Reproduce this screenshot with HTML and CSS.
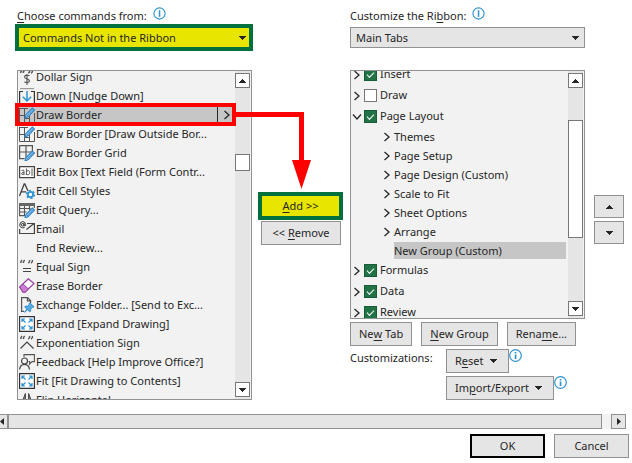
FILE: index.html
```
<!DOCTYPE html>
<html lang="en">
<head>
<meta charset="UTF-8">
<meta name="viewport" content="width=device-width, initial-scale=1.0">
<title>Customize the Ribbon</title>
<link rel="stylesheet" href="styles.css">
</head>
<body>

<!-- shared icons -->
<svg class="sprite" aria-hidden="true">
  <symbol id="down" viewBox="0 0 7 4"><path d="M0 0h7v1H6v1H5v1H4v1H3V3H2V2H1V1H0z"/></symbol>
  <symbol id="up" viewBox="0 0 7 4"><path d="M3 0h1v1h1v1h1v1h1v1H0V3h1V2h1V1h1z"/></symbol>
  <symbol id="chevron" viewBox="0 0 8 10"><path d="M1.5 1L6 5L1.5 9" fill="none" stroke="#262626" stroke-width="1.3"/></symbol>
  <symbol id="info" viewBox="0 0 13 13">
    <circle cx="6.5" cy="6.5" r="5.8" fill="#fff" stroke="#2e93d1" stroke-width="1.2"/>
    <path d="M5.7 3h1.7v1.5H5.7zM5.7 5.5h1.7V10H5.7z" fill="#2e93d1"/>
  </symbol>
  <symbol id="info-thin" viewBox="0 0 13 13">
    <circle cx="6.5" cy="6.5" r="5.6" fill="#fff" stroke="#2e93d1" stroke-width="1.1"/>
    <path d="M5.8 3.2h1.5v6.6H5.8z" fill="#2e93d1"/>
  </symbol>
  <symbol id="quotes" viewBox="0 0 16 16">
    <path d="M3.2 1.2Q1.6 2 1.8 4M5.8 1.2Q4.2 2 4.4 4M10.6 1Q11 3.2 9.2 4.2M13.4 1Q13.8 3.2 12 4.2" fill="none" stroke="#555" stroke-width="1.5"/>
  </symbol>
  <symbol id="pencil" viewBox="0 0 16 16">
    <path d="M6 11L7 7.5L13.3 1L15.5 3L9.3 9.6z" fill="#9fcdf0" stroke="#2d83c8" stroke-width="1.1"/>
    <path d="M8 9L14.4 2.2" stroke="#2d83c8" stroke-width=".8"/>
  </symbol>
  <symbol id="border" viewBox="0 0 16 16">
    <path d="M.5 1v14.500h15V6M.5 1.500H9M.5 8.500H6M5.500 1.500v14M10.500 9v6.500M5.500 11.500h5" fill="none" stroke="#555" stroke-width="1"/>
    <use href="#pencil"/>
  </symbol>
  <symbol id="expand" viewBox="0 0 16 16">
    <path d="M.6.6h14.8v14.8H.6z" fill="#fff" stroke="#333" stroke-width="1.2"/>
    <path d="M6.5 6.5L3 3M9.5 6.5L13 3M6.5 9.5L3 13M9.5 9.5L13 13M3 6V3h3M10 3h3v3M3 10v3h3M10 13h3v-3" fill="none" stroke="#2e93d1" stroke-width="1.2"/>
  </symbol>
</svg>

<div class="columns">
  <section class="commands">
    <div class="caption">
      <label for="source"><u>C</u>hoose commands from:</label>
      <svg class="info"><use href="#info-thin"/></svg>
    </div>
    <div class="picker picker-marked">
      <select id="source"><option>Commands Not in the Ribbon</option></select>
      <svg class="arrow"><use href="#down"/></svg>
    </div>

    <div class="listbox">
      <ul class="items">
        <li><svg class="icon" viewBox="0 0 16 16"><use href="#quotes"/><path d="M10.5 6.5Q5.5 5.5 5.6 8Q5.7 9.4 8 10Q10.6 10.6 10.4 12.3Q9.5 14.3 5.3 13M8 5v11" fill="none" stroke="#555" stroke-width="1.1"/></svg>Dollar Sign</li>
        <li><svg class="icon" viewBox="0 0 16 16"><path d="M1 .6h14" stroke="#999" stroke-width="1.2"/><path d="M4 3.5H.6v12h14.8v-12H12" fill="none" stroke="#333" stroke-width="1.2"/><path d="M8 3v10M3.8 8.8L8 13l4.2-4.2" fill="none" stroke="#2e93d1" stroke-width="1.5"/></svg>Down [Nudge Down]</li>
        <li class="selected"><svg class="icon"><use href="#border"/></svg><span class="name">Draw Border</span><span class="more"><svg><use href="#chevron"/></svg></span></li>
        <li><svg class="icon"><use href="#border"/></svg>Draw Border [Draw Outside Bor...</li>
        <li><svg class="icon" viewBox="0 0 16 16"><path d="M.6.6h12.8v7M7 .6V14M.6 7H12M.6.6v13h5" fill="none" stroke="#555" stroke-width="1.2"/><svg y="5" x="0" width="16" height="16" viewBox="0 0 16 16"><use href="#pencil"/></svg></svg>Draw Border Grid</li>
        <li><svg class="icon" viewBox="0 0 16 16"><path d="M.6 2.6h14.8v11H.6z" fill="#fff" stroke="#444" stroke-width="1.2"/><path d="M2.5 6.5Q5 5.3 5 7.2V11M5 8.5Q2.4 8.3 2.4 9.8Q2.7 11.4 5 10M7.4 4.5V11M7.4 7.4Q10.6 5.2 10.7 8.6Q10.4 11.7 7.4 10.3M13 4.5v7.3" fill="none" stroke="#555"/></svg>Edit Box [Text Field (Form Contr...</li>
        <li><svg class="icon" viewBox="0 0 16 16"><path d="M.5 13L5.2 1h.6L9 8M2.2 8.8h5" fill="none" stroke="#444" stroke-width="1.3"/><circle cx="11.5" cy="11.5" r="2.6" fill="#fff" stroke="#2e93d1" stroke-width="1.8"/><circle cx="11.5" cy="11.5" r="3.9" fill="none" stroke="#2e93d1" stroke-width="1.6" stroke-dasharray="2 2.08"/></svg>Edit Cell Styles</li>
        <li><svg class="icon" viewBox="0 0 16 16"><path d="M.6 1.6h14.8V6M.6 1.6v12h6M5.5 4v9.5M10.5 4v4M.6 6.5h11M.6 10h7" fill="none" stroke="#555" stroke-width="1.1"/><path d="M0 1h16v3H0z" fill="#666"/><svg y="5" x="0" width="16" height="16" viewBox="0 0 16 16"><use href="#pencil"/></svg></svg>Edit Query...</li>
        <li><svg class="icon" viewBox="0 0 16 16"><path d="M8 2.5h7.4v10H.6V8M7.5 8.5l7.5-6" fill="none" stroke="#444" stroke-width="1.2"/><circle cx="3.7" cy="3.8" r="1.3" fill="none" stroke="#333"/><path d="M5 2.4v2.3Q6.6 5.5 6.6 3.3Q6 .6 3.6.6Q.7 1 .7 4.2Q1.2 7.5 5.6 6.6" fill="none" stroke="#333"/></svg>Email</li>
        <li><span class="icon"></span>End Review...</li>
        <li><svg class="icon" viewBox="0 0 16 16"><use href="#quotes"/><path d="M4 9.5h8M4 12.5h8" stroke="#444" stroke-width="1.1"/></svg>Equal Sign</li>
        <li><svg class="icon" viewBox="0 0 16 16"><path d="M.8 9L9.3.8l5.6 4.8L6 14H4z" fill="#fff" stroke="#9b3fa8" stroke-width="1.3"/><path d="M.8 9L4 6l5.5 5L6 14.3H4z" fill="#c77dd0" stroke="#9b3fa8"/></svg>Erase Border</li>
        <li><svg class="icon" viewBox="0 0 16 16"><path d="M5 14.4H2.6V.6h6l3 3V6M8.4.8v3h3" fill="none" stroke="#555" stroke-width="1.2"/><path d="M11 5.8l4 4-1 .6-.7-.1-1.6 1.8v2l-1 .8-5-5 .8-.9 2 .1 1.7-1.6-.1-1z" fill="#54a9e4" stroke="#2583c6" stroke-width=".8"/><path d="M8.3 12.3L5.4 15.3" stroke="#2583c6" stroke-width="1.2"/></svg>Exchange Folder... [Send to Exc...</li>
        <li><svg class="icon"><use href="#expand"/></svg>Expand [Expand Drawing]</li>
        <li><svg class="icon" viewBox="0 0 16 16"><use href="#quotes"/><path d="M1.5 13.5L8 7l6.5 6.5" fill="none" stroke="#444" stroke-width="1.2"/></svg>Exponentiation Sign</li>
        <li><svg class="icon" viewBox="0 0 16 16"><path d="M5 3V.6h10.4v7H13l-2.4 2.6V7.6H9.5" fill="none" stroke="#555" stroke-width="1.1"/><circle cx="5.5" cy="7" r="3" fill="none" stroke="#444" stroke-width="1.2"/><path d="M.6 15.5Q1 10.4 5.5 10.3Q10 10.4 10.5 15.5" fill="none" stroke="#444" stroke-width="1.2"/></svg>Feedback [Help Improve Office?]</li>
        <li><svg class="icon"><use href="#expand"/></svg>Fit [Fit Drawing to Contents]</li>
        <li><svg class="icon" viewBox="0 0 16 16"><path d="M6.4 1.5V15H1.2zM9.6 1.5V15h5.2z" fill="#888" stroke="#444"/></svg>Flip Horizontal</li>
      </ul>
      <div class="scrollbar">
        <button type="button" aria-label="Scroll up"><svg class="arrow"><use href="#up"/></svg></button>
        <div class="track track-commands"><div class="thumb"></div></div>
        <button type="button" aria-label="Scroll down"><svg class="arrow"><use href="#down"/></svg></button>
      </div>
    </div>

    <div class="callout"></div>
    <svg class="callout-arrow" viewBox="0 0 76 80"><path d="M0 2h68v48h7L65.500 79L56 50h7V7H0z" fill="#f00"/></svg>
  </section>

  <div class="transfer">
    <button type="button" class="add"><u>A</u>dd &gt;&gt;</button>
    <button type="button">&lt;&lt; <u>R</u>emove</button>
  </div>

  <section class="ribbon">
    <div class="caption">
      <label for="target">Customize the Ri<u>b</u>bon:</label>
      <svg class="info"><use href="#info-thin"/></svg>
    </div>
    <div class="picker">
      <select id="target"><option>Main Tabs</option></select>
      <svg class="arrow"><use href="#down"/></svg>
    </div>

    <div class="listbox">
      <ul class="tree">
        <li class="tab"><svg class="twist"><use href="#chevron"/></svg><input type="checkbox" id="t1" checked><label for="t1">Insert</label></li>
        <li class="tab"><svg class="twist"><use href="#chevron"/></svg><input type="checkbox" id="t2"><label for="t2">Draw</label></li>
        <li class="tab"><svg class="twist open"><use href="#chevron"/></svg><input type="checkbox" id="t3" checked><label for="t3">Page Layout</label></li>
        <li class="group"><svg class="twist"><use href="#chevron"/></svg><span>Themes</span></li>
        <li class="group"><svg class="twist"><use href="#chevron"/></svg><span>Page Setup</span></li>
        <li class="group"><svg class="twist"><use href="#chevron"/></svg><span>Page Design (Custom)</span></li>
        <li class="group"><svg class="twist"><use href="#chevron"/></svg><span>Scale to Fit</span></li>
        <li class="group"><svg class="twist"><use href="#chevron"/></svg><span>Sheet Options</span></li>
        <li class="group"><svg class="twist"><use href="#chevron"/></svg><span>Arrange</span></li>
        <li class="group"><span class="twist"></span><span class="current">New Group (Custom)</span></li>
        <li class="tab"><svg class="twist"><use href="#chevron"/></svg><input type="checkbox" id="t4" checked><label for="t4">Formulas</label></li>
        <li class="tab"><svg class="twist"><use href="#chevron"/></svg><input type="checkbox" id="t5" checked><label for="t5">Data</label></li>
        <li class="tab"><svg class="twist"><use href="#chevron"/></svg><input type="checkbox" id="t6" checked><label for="t6">Review</label></li>
      </ul>
      <div class="scrollbar">
        <button type="button" aria-label="Scroll up"><svg class="arrow"><use href="#up"/></svg></button>
        <div class="track track-tabs"><div class="thumb"></div></div>
        <button type="button" aria-label="Scroll down"><svg class="arrow"><use href="#down"/></svg></button>
      </div>
    </div>

    <div class="tab-actions">
      <button type="button">Ne<u>w</u> Tab</button>
      <button type="button"><u>N</u>ew Group</button>
      <button type="button">Rena<u>m</u>e...</button>
    </div>
    <div class="customizations">
      <span class="title">Customizations:</span>
      <div class="menus">
        <div class="menu">
          <button type="button"><span>R<u>e</u>set</span><svg class="arrow"><use href="#down"/></svg></button>
          <svg class="info"><use href="#info"/></svg>
        </div>
        <div class="menu">
          <button type="button"><span>Im<u>p</u>ort/Export</span><svg class="arrow"><use href="#down"/></svg></button>
          <svg class="info"><use href="#info"/></svg>
        </div>
      </div>
    </div>
  </section>

  <div class="movers">
    <button type="button" aria-label="Move up"><svg class="arrow"><use href="#up"/></svg></button>
    <button type="button" aria-label="Move down"><svg class="arrow"><use href="#down"/></svg></button>
  </div>
</div>

<div class="hscroll">
  <button type="button" class="left" aria-label="Scroll left"><svg viewBox="0 0 4 7"><path d="M4 0v7L0 3.500z"/></svg></button>
  <div class="bar"></div>
  <button type="button" class="right" aria-label="Scroll right"><svg viewBox="0 0 4 7"><path d="M0 0v7L4 3.500z"/></svg></button>
</div>

<div class="footer">
  <button type="button" class="ok">OK</button>
  <button type="button">Cancel</button>
</div>

</body>
</html>
```
FILE: styles.css
```
* {
  box-sizing: border-box;
}
body {
  margin: 0;
  padding-top: 7px;
  background-color: #fff;
  color: #262626;
  font-family: "Noto Sans", "Open Sans", sans-serif;
  font-size: 11px;
  line-height: 18px;
  overflow: hidden;
}
ul {
  list-style: none;
  margin: 0;
  padding: 0;
}
svg {
  display: block;
  flex: none;
  fill: #262626;
}
u {
  text-underline-offset: 2px;
}
button, select {
  font: inherit;
  color: inherit;
  white-space: nowrap;
}
button {
  display: flex;
  align-items: center;
  justify-content: center;
  height: 24px;
  padding: 0;
  border: 1px solid #919191;
  background-color: #e5e5e5;
  white-space: pre;
}
.sprite {
  position: absolute;
  width: 0;
  height: 0;
}
.arrow {
  width: 7px;
  height: 4px;
}
.info {
  width: 13px;
  height: 13px;
}
.columns {
  display: grid;
  grid-template-columns: 1fr 80px 1fr 30px;
  gap: 9px;
  height: 393px;
  padding: 0 8px 0 17px;
}
.commands, .ribbon {
  display: flex;
  flex-direction: column;
  min-width: 0;
}
.commands {
  position: relative;
}
.caption {
  display: flex;
  gap: 6px;
  height: 20px;
}
.picker {
  position: relative;
  margin-bottom: 22px;
}
.picker select {
  display: block;
  appearance: none;
  width: 100%;
  height: 21px;
  padding: 0 5px;
  border: 1px solid #919191;
  border-radius: 0;
  background-color: #e5e5e5;
}
.picker .arrow {
  position: absolute;
  top: 9px;
  right: 6px;
}
.picker-marked {
  margin: -3px -1px 19px -2px;
}
.picker-marked select {
  height: 27px;
  padding: 0 4px;
  border: 4px solid #00703c;
  background-color: #e8e600;
}
.picker-marked .arrow {
  top: 12px;
  right: 7px;
}
.listbox {
  display: flex;
  border: 1px solid #919191;
  background-color: #f2f2f2;
  overflow: hidden;
}
.commands .listbox {
  height: 330px;
}
.ribbon .listbox {
  height: 249px;
}
.items, .tree {
  flex: 1;
  min-width: 0;
  white-space: nowrap;
}
.items {
  margin-top: -4px;
}
.items li {
  display: flex;
  align-items: center;
  gap: 1px;
  height: 19px;
  padding-left: 1px;
}
.icon {
  width: 16px;
  height: 16px;
}
.items .selected {
  background-color: #c6c6c6;
}
.name {
  flex: 1;
}
.more {
  display: flex;
  align-items: center;
  justify-content: center;
  width: 18px;
  height: 19px;
  border-left: 1px solid #262626;
}
.more svg {
  width: 8px;
  height: 10px;
}
.scrollbar {
  display: flex;
  flex-direction: column;
  width: 15px;
  margin-right: 1px;
  padding: 2px 0;
  background-color: #e5e5e5;
}
.scrollbar button {
  flex: none;
  width: 15px;
  height: 15px;
  border-color: #777;
  background-color: #fff;
}
.track {
  flex: 1;
}
.thumb {
  border: 1px solid #777;
  background-color: #fff;
}
.track-commands {
  padding-top: 66px;
}
.track-commands .thumb {
  height: 17px;
}
.track-tabs {
  padding-top: 32px;
}
.track-tabs .thumb {
  height: 118px;
}

/* red marker round the chosen command */
.callout {
  position: absolute;
  top: 96px;
  left: -2px;
  right: 16px;
  height: 23px;
  border: 4px solid #f00;
}
.callout-arrow {
  position: absolute;
  top: 103px;
  left: calc(100% - 16px);
  width: 76px;
  height: 80px;
}

.transfer {
  display: flex;
  flex-direction: column;
  gap: 1px;
  padding-top: 185px;
}
.transfer .add {
  height: 28px;
  margin: 0 -2px 0 -3px;
  border: 4px solid #00703c;
  background-color: #e8e600;
}
.tree {
  margin-top: -7px;
  margin-right: 2px;
}
.tree li {
  display: flex;
  align-items: center;
}
.twist {
  width: 8px;
  height: 10px;
}
.open {
  transform: rotate(90deg);
}
.tab {
  gap: 3px;
  height: 21px;
  padding-left: 2px;
}
.tab label {
  padding-bottom: 2px;
}
.group {
  gap: 3px;
  height: 19px;
  padding-left: 32px;
}
.current {
  flex: 1;
  height: 17px;
  line-height: 17px;
  background-color: #c6c6c6;
}
.tab input {
  appearance: none;
  position: relative;
  width: 13px;
  height: 13px;
  margin: 0;
  border: 1px solid #777;
  background-color: #fff;
}
.tab input:checked {
  border-color: #185c37;
  background-color: #217346;
}
.tab input:checked::after {
  content: "";
  box-sizing: border-box;
  position: absolute;
  top: 3px;
  left: 2px;
  width: 7px;
  height: 4px;
  border: solid #fff;
  border-width: 0 0 1px 1px;
  transform: rotate(-45deg);
}
.tab-actions {
  display: flex;
  gap: 9px;
  padding-top: 3px;
}
.tab-actions button {
  padding: 0 8px;
}
.customizations {
  display: flex;
  padding-top: 3px;
}
.title {
  width: 96px;
}
.menus {
  display: flex;
  flex-direction: column;
  gap: 3px;
}
.menu {
  display: flex;
}
.menu button {
  gap: 6px;
  padding: 0 11px 0 8px;
}
.movers {
  display: flex;
  flex-direction: column;
  gap: 3px;
  padding-top: 188px;
}
.movers button {
  height: 23px;
}
.hscroll {
  display: flex;
  height: 15px;
  margin: 14px 6px 0 0;
  background-color: #f2f2f2;
}
.hscroll button {
  width: 15px;
  height: 15px;
}
.hscroll svg {
  width: 4px;
  height: 7px;
}
.hscroll .left {
  width: 8px;
  border-left: 0;
  justify-content: flex-start;
}
.bar {
  flex: 1;
  margin-right: 9px;
  border: 1px solid #919191;
  background-color: #e5e5e5;
}
.footer {
  display: flex;
  justify-content: flex-end;
  gap: 9px;
  padding: 5px 3px 0 0;
}
.footer button {
  width: 75px;
}
.footer .ok {
  border: 2px solid #000;
}
```
